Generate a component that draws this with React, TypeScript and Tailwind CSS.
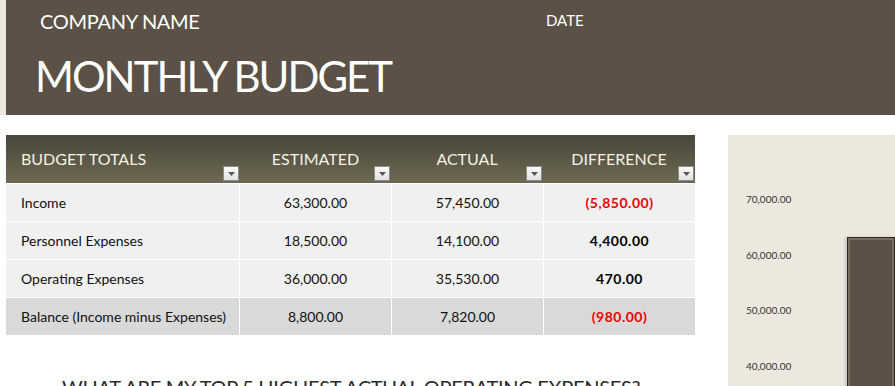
import React from "react";

const font = { fontFamily: "Lato, 'Open Sans', sans-serif" };

function DropBtn() {
  return (
    <div className="w-[16px] h-[15px] border border-[#8a8a8a] bg-gradient-to-b from-[#fbfbfb] to-[#e2e2e2] flex items-center justify-center">
      <svg width="7" height="4" viewBox="0 0 7 4">
        <path d="M0 0 H7 L3.5 4 Z" fill="#555" />
      </svg>
    </div>
  );
}

const rows = [
  { label: "Income", est: "63,300.00", act: "57,450.00", diff: "(5,850.00)", neg: true, bal: false },
  { label: "Personnel Expenses", est: "18,500.00", act: "14,100.00", diff: "4,400.00", neg: false, bal: false },
  { label: "Operating Expenses", est: "36,000.00", act: "35,530.00", diff: "470.00", neg: false, bal: false },
  { label: "Balance (Income minus Expenses)", est: "8,800.00", act: "7,820.00", diff: "(980.00)", neg: true, bal: true },
];

export default function App() {
  return (
    <div className="w-[895px] h-[386px] overflow-hidden bg-white relative" style={font}>
      {/* Header */}
      <div className="flex h-[115px]">
        <div className="w-[6px] bg-[#ece8dd]" />
        <div className="flex-1 bg-[#5b5146] text-white relative">
          <div className="flex items-start">
            <div className="pl-[34px] pt-[8px] w-[540px] text-[20px] leading-[26px] tracking-[-0.3px]">COMPANY NAME</div>
            <div className="pt-[10px] text-[15px] leading-[20px]">DATE</div>
          </div>
          <div className="pl-[29px] pt-[17px] text-[42px] leading-[50px] tracking-[-2px]">MONTHLY BUDGET</div>
        </div>
      </div>

      <div className="flex mt-[20px]">
        {/* Table */}
        <div className="ml-[6px] w-[689px] relative">
          <div className="flex h-[48px] bg-gradient-to-b from-[#49473a] to-[#6d6953] text-[#f4f1e6] text-[16px]">
            <div className="w-[234px] relative pl-[15px] pt-[14px] leading-[20px]">
              BUDGET TOTALS
              <div className="absolute right-[1px] bottom-[2px]"><DropBtn /></div>
            </div>
            <div className="w-[151px] relative text-center pt-[14px] leading-[20px]">
              ESTIMATED
              <div className="absolute right-[1px] bottom-[2px]"><DropBtn /></div>
            </div>
            <div className="w-[152px] relative text-center pt-[14px] leading-[20px]">
              ACTUAL
              <div className="absolute right-[1px] bottom-[2px]"><DropBtn /></div>
            </div>
            <div className="w-[152px] relative text-center pt-[14px] leading-[20px]">
              DIFFERENCE
              <div className="absolute right-[1px] bottom-[2px]"><DropBtn /></div>
            </div>
          </div>
          {rows.map((r, i) => (
            <div
              key={i}
              className={`flex h-[38px] text-[14px] text-[#111] border-t border-white ${r.bal ? "bg-[#d9d9d9]" : "bg-[#f0f0f0]"}`}
            >
              <div className="w-[233px] pl-[15px] flex items-center">{r.label}</div>
              <div className="w-[152px] border-l border-white flex items-center justify-center">{r.est}</div>
              <div className="w-[152px] border-l border-white flex items-center justify-center">{r.act}</div>
              <div
                className={`w-[152px] border-l border-white flex items-center justify-center font-bold tracking-[0.5px] ${r.neg ? "text-[#ee0000]" : "text-black"}`}
              >
                {r.diff}
              </div>
            </div>
          ))}
          <div className="absolute right-0 bottom-[0px] w-[4px] h-[4px] bg-[#3f51b5]" />
          <div className="pl-[56px] pt-[40px] text-[20px] leading-[24px] tracking-[-0.3px] text-[#2a2a2a] whitespace-nowrap">
            WHAT ARE MY TOP 5 HIGHEST ACTUAL OPERATING EXPENSES?
          </div>
        </div>

        {/* Chart */}
        <div className="ml-[33px] flex-1 h-[260px] bg-[#ece8de] flex">
          <div className="pl-[18px] pt-[58px] flex flex-col gap-[42.5px] text-[10px] leading-[13px] text-[#333] w-[119px]">
            <div>70,000.00</div>
            <div>60,000.00</div>
            <div>50,000.00</div>
            <div>40,000.00</div>
          </div>
          <div className="mt-[102px] flex-1 border border-[#2e2924] bg-[#7a6e60] p-[2px] shadow-[-2px_0_3px_rgba(0,0,0,0.15)]">
            <div className="w-full h-full bg-[#5b5146]" />
          </div>
        </div>
      </div>
    </div>
  );
}
